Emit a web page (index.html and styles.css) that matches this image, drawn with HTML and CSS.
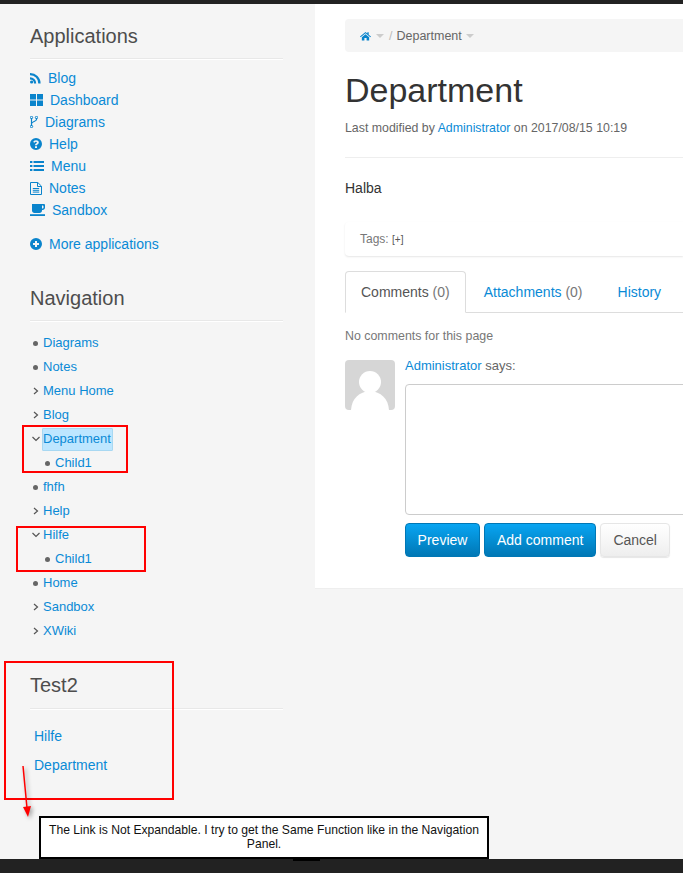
FILE: index.html
```html
<!DOCTYPE html>
<html lang="en">
<head>
<meta charset="utf-8">
<title>Department</title>
<link rel="stylesheet" href="styles.css">
</head>
<body>
<div class="topbar"></div>
<div class="layout">
  <aside class="sidebar">
    <section class="panel panel-apps">
      <h2 class="panel-title">Applications</h2>
      <ul class="apps">
        <li><a class="app" href="#"><svg class="ico" width="11" height="12" viewBox="0 0 11 12"><circle cx="1.6" cy="10" r="1.6"/><path d="M0 5.2a6.2 6.2 0 0 1 6.2 6.3H4A4 4 0 0 0 0 7.4z"/><path d="M0 1a10.4 10.4 0 0 1 10.6 10.5H8.3A8.2 8.2 0 0 0 0 3.2z"/></svg>Blog</a></li>
        <li><a class="app" href="#"><svg class="ico" width="13" height="12" viewBox="0 0 13 12"><rect x="0" y="0" width="6" height="5.5"/><rect x="7" y="0" width="6" height="5.5"/><rect x="0" y="6.5" width="6" height="5.5"/><rect x="7" y="6.5" width="6" height="5.5"/></svg>Dashboard</a></li>
        <li><a class="app" href="#"><svg class="ico" width="8" height="12" viewBox="0 0 8 12"><path d="M1.5 2v8M6.500 2v1.500C6.500 5.500 2 5.500 1.500 7.500" fill="none" stroke="#0a84cc" stroke-width="1.2"/><circle cx="1.5" cy="1.5" r="1.2" fill="none" stroke="#0a84cc"/><circle cx="6.5" cy="1.5" r="1.2" fill="none" stroke="#0a84cc"/><circle cx="1.5" cy="10.5" r="1.2" fill="none" stroke="#0a84cc"/></svg>Diagrams</a></li>
        <li><a class="app" href="#"><svg class="ico" width="12" height="12" viewBox="0 0 12 12"><path fill-rule="evenodd" d="M6 0a6 6 0 1 1 0 12A6 6 0 0 1 6 0zM5 8.200v1.700h2V8.200zM6 2.200C4.500 2.200 3.500 3 3.200 4.100l1.400.6C4.800 4 5.300 3.700 5.900 3.700c.6 0 1 .3 1 .8 0 .4-.3.6-.8.9C5.400 5.800 5 6.300 5 7.200h2c0-.5.2-.7.7-1C8.300 5.800 8.800 5.200 8.800 4.400 8.800 3 7.600 2.200 6 2.200z"/></svg>Help</a></li>
        <li><a class="app" href="#"><svg class="ico" width="14" height="10" viewBox="0 0 14 10"><rect x="0" y="0" width="2.4" height="2"/><rect x="3.5" y="0" width="10.5" height="2"/><rect x="0" y="4" width="2.4" height="2"/><rect x="3.5" y="4" width="10.5" height="2"/><rect x="0" y="8" width="2.4" height="2"/><rect x="3.5" y="8" width="10.5" height="2"/></svg>Menu</a></li>
        <li><a class="app" href="#"><svg class="ico" width="12" height="13" viewBox="0 0 12 13"><path d="M.5.5h7.300l3.700 3.700v8.300H.5z" fill="none" stroke="#0a84cc"/><path d="M7.500.5v4h4M2.800 6.500h6.400M2.800 8.300h6.400M2.800 10.100h6.400" fill="none" stroke="#0a84cc"/></svg>Notes</a></li>
        <li><a class="app" href="#"><svg class="ico" width="15" height="12" viewBox="0 0 15 12"><path fill-rule="evenodd" d="M2 0h12a1 1 0 0 1 1 1v2.500C15 5 14 6 12.500 6H12v.5C12 8 11 9 9.500 9H4.500C3 9 2 8 2 6.500zM12 1.500V4.500h.5c.6 0 1-.4 1-1v-1c0-.6-.4-1-1-1z"/><rect x="0" y="10.200" width="15" height="1.800"/></svg>Sandbox</a></li>
      </ul>
      <a class="app more" href="#"><svg class="ico" width="12" height="12" viewBox="0 0 12 12"><path fill-rule="evenodd" d="M6 0a6 6 0 1 1 0 12A6 6 0 0 1 6 0zM5 3v2H3v2h2v2h2V7h2V5H7V3z"/></svg>More applications</a>
    </section>

    <section class="panel panel-nav">
      <h2 class="panel-title">Navigation</h2>
      <ul class="tree">
        <li class="node"><span class="dot"></span><a href="#">Diagrams</a></li>
        <li class="node"><span class="dot"></span><a href="#">Notes</a></li>
        <li class="node"><svg class="caret" width="6" height="8" viewBox="0 0 6 8"><path d="M1 1l3.500 3L1 7"/></svg><a href="#">Menu Home</a></li>
        <li class="node"><svg class="caret" width="6" height="8" viewBox="0 0 6 8"><path d="M1 1l3.500 3L1 7"/></svg><a href="#">Blog</a></li>
        <li class="node"><svg class="caret open" width="8" height="6" viewBox="0 0 8 6"><path d="M.5 1L4 4.500 7.500 1"/></svg><a class="selected" href="#">Department</a></li>
        <li class="node child"><span class="dot"></span><a href="#">Child1</a></li>
        <li class="node"><span class="dot"></span><a href="#">fhfh</a></li>
        <li class="node"><svg class="caret" width="6" height="8" viewBox="0 0 6 8"><path d="M1 1l3.500 3L1 7"/></svg><a href="#">Help</a></li>
        <li class="node"><svg class="caret open" width="8" height="6" viewBox="0 0 8 6"><path d="M.5 1L4 4.500 7.500 1"/></svg><a href="#">Hilfe</a></li>
        <li class="node child"><span class="dot"></span><a href="#">Child1</a></li>
        <li class="node"><span class="dot"></span><a href="#">Home</a></li>
        <li class="node"><svg class="caret" width="6" height="8" viewBox="0 0 6 8"><path d="M1 1l3.500 3L1 7"/></svg><a href="#">Sandbox</a></li>
        <li class="node"><svg class="caret" width="6" height="8" viewBox="0 0 6 8"><path d="M1 1l3.500 3L1 7"/></svg><a href="#">XWiki</a></li>
      </ul>
    </section>

    <section class="panel panel-test">
      <h2 class="panel-title">Test2</h2>
      <ul class="plain">
        <li><a href="#">Hilfe</a></li>
        <li><a href="#">Department</a></li>
      </ul>
    </section>
  </aside>

  <main class="content">
    <nav class="crumbs">
      <svg class="home" width="11" height="10" viewBox="0 0 12 10"><path d="M6 .5l2 1.700V1h1.500v2.500L12 5.600l-.7.800L6 2 .7 6.400 0 5.600z"/><path d="M6 3l4 3.300V10H7.200V7.300H4.800V10H2V6.300z"/></svg>
      <span class="tri"></span>
      <span class="sep">/</span>
      <span class="crumb">Department</span>
      <span class="tri"></span>
    </nav>
    <h1 class="title">Department</h1>
    <p class="meta">Last modified by <a href="#">Administrator</a> on 2017/08/15 10:19</p>
    <hr class="rule">
    <p class="body-text">Halba</p>
    <div class="tags">Tags: <a class="add-tag" href="#">[+]</a></div>
    <div class="tabs">
      <a class="tab active" href="#">Comments <span class="count">(0)</span></a>
      <a class="tab tab-wide" href="#">Attachments <span class="count">(0)</span></a>
      <a class="tab" href="#">History</a>
    </div>
    <p class="none">No comments for this page</p>
    <div class="comment">
      <svg class="avatar" width="50" height="50" viewBox="0 0 50 50"><path d="M4 0h42a4 4 0 0 1 4 4v42a4 4 0 0 1-4 4H4a4 4 0 0 1-4-4V4a4 4 0 0 1 4-4z" fill="#d6d6d6"/><circle cx="25" cy="22" r="11" fill="#fff"/><path d="M6 50C7 38 14 32 25 31c11 1 18 7 19 19z" fill="#fff"/></svg>
      <div class="form">
        <div class="says"><a href="#">Administrator</a> says:</div>
        <textarea class="box" aria-label="Comment"></textarea>
        <div class="actions">
          <button class="btn primary preview" type="button">Preview</button>
          <button class="btn primary" type="button">Add comment</button>
          <button class="btn plain-btn" type="button">Cancel</button>
        </div>
      </div>
    </div>
  </main>
</div>
<div class="bottombar"></div>

<div class="mark mark-a"></div>
<div class="mark mark-b"></div>
<div class="mark mark-c"></div>
<svg class="arrow" width="24" height="60" viewBox="0 0 24 60"><path d="M3 1l4 42" stroke="#f00" stroke-width="1.5" fill="none"/><path d="M3 42l8-1-3 11z" fill="#f00"/></svg>
<div class="note">The Link is Not Expandable. I try to get the Same Function like in the Navigation Panel.</div>
<div class="nub"></div>
</body>
</html>
```

FILE: styles.css
```css
* { box-sizing: border-box; }
html, body { margin: 0; padding: 0; }
body {
  width: 683px;
  height: 873px;
  overflow: hidden;
  position: relative;
  display: flex;
  flex-direction: column;
  background: #f5f5f5;
  color: #333;
  font-family: "Liberation Sans", Arial, sans-serif;
  font-size: 14px;
  line-height: 20px;
}
a { color: #0a8ad6; text-decoration: none; }
ul { list-style: none; margin: 0; padding: 0; }
p { margin: 0; }

.topbar { height: 4px; background: #222; flex: none; }
.bottombar { height: 14px; background: #222; flex: none; }
.layout { flex: 1; display: flex; min-height: 0; align-items: flex-start; }

/* sidebar */
.sidebar { width: 315px; flex: none; padding: 0 32px 0 30px; }
.panel-title {
  margin: 0;
  font-size: 20px;
  font-weight: 400;
  line-height: 24px;
  color: #4d4d4d;
  padding-bottom: 10px;
  border-bottom: 1px solid #e8e8e8;
  box-shadow: 0 1px 0 #fff;
}
.panel-apps { padding-top: 20px; }
.apps { margin-top: 8px; }
.apps li { height: 22px; }
.app { display: flex; align-items: center; gap: 7px; height: 22px; }
.ico { fill: #0a84cc; flex: none; }
.more { margin-top: 12px; }

.panel-nav { padding-top: 31px; }
.tree { margin-top: 10px; }
.node { display: flex; align-items: center; height: 24px; font-size: 13px; }
.node > a { margin-left: 3px; }
.node > .dot, .node > .caret { flex: none; }
.dot {
  width: 5px;
  height: 5px;
  margin: 0 2px 0 3px;
  border-radius: 50%;
  background: #666;
}
.caret { fill: none; stroke: #555; stroke-width: 1.2; margin: 0 1px 0 3px; }
.caret.open { margin: 0 0 0 2px; }
.child { padding-left: 12px; }
.node > .selected {
  display: block;
  margin-left: 2px;
  padding: 0 1px 0 0;
  height: 23px;
  background: #bde6ff;
  border: 1px solid #a8d8f2;
  border-radius: 1px;
  line-height: 20px;
}

.panel-test { padding-top: 30px; }
.panel-test .panel-title { padding-bottom: 11px; }
.plain { margin-top: 13px; padding-left: 4px; }
.plain li { height: 29px; line-height: 29px; }

/* content */
.content {
  flex: 1;
  min-width: 0;
  height: 584px;
  background: #fff;
  padding: 15px 0 0 30px;
  box-shadow: 0 1px 0 #eee;
}
.crumbs {
  height: 33px;
  background: #f5f5f5;
  border-radius: 4px 0 0 4px;
  display: flex;
  align-items: center;
  padding-left: 15px;
  font-size: 12.5px;
  color: #666;
}
.home { fill: #0a84cc; margin-right: 5px; }
.tri {
  width: 0;
  height: 0;
  border: 4px solid transparent;
  border-top-color: #ccc;
  border-bottom: 0;
}
.sep { margin: 0 4px 0 5px; color: #bbb; }
.crumb { margin-right: 4px; }
.title {
  margin: 18px 0 0;
  font-size: 34px;
  font-weight: 400;
  line-height: 40px;
  color: #333;
}
.meta { margin-top: 8px; font-size: 12.35px; line-height: 20px; color: #666; }
.rule { margin: 19px 0 0; border: 0; border-top: 1px solid #eee; }
.body-text { margin-top: 20px; line-height: 20px; color: #333; }
.tags {
  margin-top: 24px;
  height: 34px;
  padding: 7px 15px 0;
  font-size: 12px;
  color: #777;
  border-radius: 4px 0 0 4px;
  box-shadow: 0 1px 2px rgba(0,0,0,.1);
}
.add-tag { font-size: 10px; color: #555; }
.tabs {
  margin-top: 15px;
  height: 42px;
  display: flex;
  border-bottom: 1px solid #ddd;
  white-space: nowrap;
}
.tab {
  height: 42px;
  padding: 10px 15px 0;
  margin-right: 2px;
  border: 1px solid transparent;
  border-radius: 4px 4px 0 0;
}
.tab-wide { padding-right: 16px; }
.tab.active { color: #555; border-color: #ddd; border-bottom-color: #fff; background: #fff; }
.count { color: #777; }
.none { margin-top: 13px; font-size: 12.4px; line-height: 20px; color: #777; }
.comment { margin-top: 14px; display: flex; gap: 10px; }
.avatar { flex: none; }
.form { flex: 1; min-width: 0; }
.says { font-size: 13px; line-height: 12px; color: #666; }
.box {
  display: block;
  width: calc(100% + 10px);
  height: 131px;
  margin-top: 12px;
  border: 1px solid #ccc;
  border-radius: 4px;
  background: #fff;
  resize: none;
}
.actions { margin-top: 8px; display: flex; gap: 4px; }
.btn {
  height: 34px;
  padding: 0 12px;
  font: 14px/20px "Liberation Sans", Arial, sans-serif;
  border-radius: 4px;
  border: 1px solid transparent;
}
.preview { width: 75px; padding: 0; }
.primary {
  color: #fff;
  background: linear-gradient(#08a5f2, #0077b5);
  border-color: #0077b5;
}
.plain-btn {
  color: #555;
  background: linear-gradient(#fff, #eee);
  border-color: #e6e6e6;
  box-shadow: 0 1px 1px rgba(0,0,0,.1);
}

/* screenshot annotations, drawn over the page */
.mark { position: absolute; border: 2px solid #f00; }
.mark-a { left: 22px; top: 425px; width: 106px; height: 48px; }
.mark-b { left: 16px; top: 526px; width: 130px; height: 46px; }
.mark-c { left: 4px; top: 661px; width: 170px; height: 139px; }
.arrow { position: absolute; left: 20px; top: 765px; filter: drop-shadow(2px 2px 2px rgba(0,0,0,.35)); }
.note {
  position: absolute;
  left: 39px;
  top: 816px;
  width: 450px;
  height: 43px;
  padding: 5px 8px 0;
  background: #fff;
  border: 2px solid #000;
  color: #111;
  font-size: 12.15px;
  line-height: 14px;
  text-align: center;
}
.nub { position: absolute; left: 293px; top: 859px; width: 27px; height: 2px; background: #000; }
```
